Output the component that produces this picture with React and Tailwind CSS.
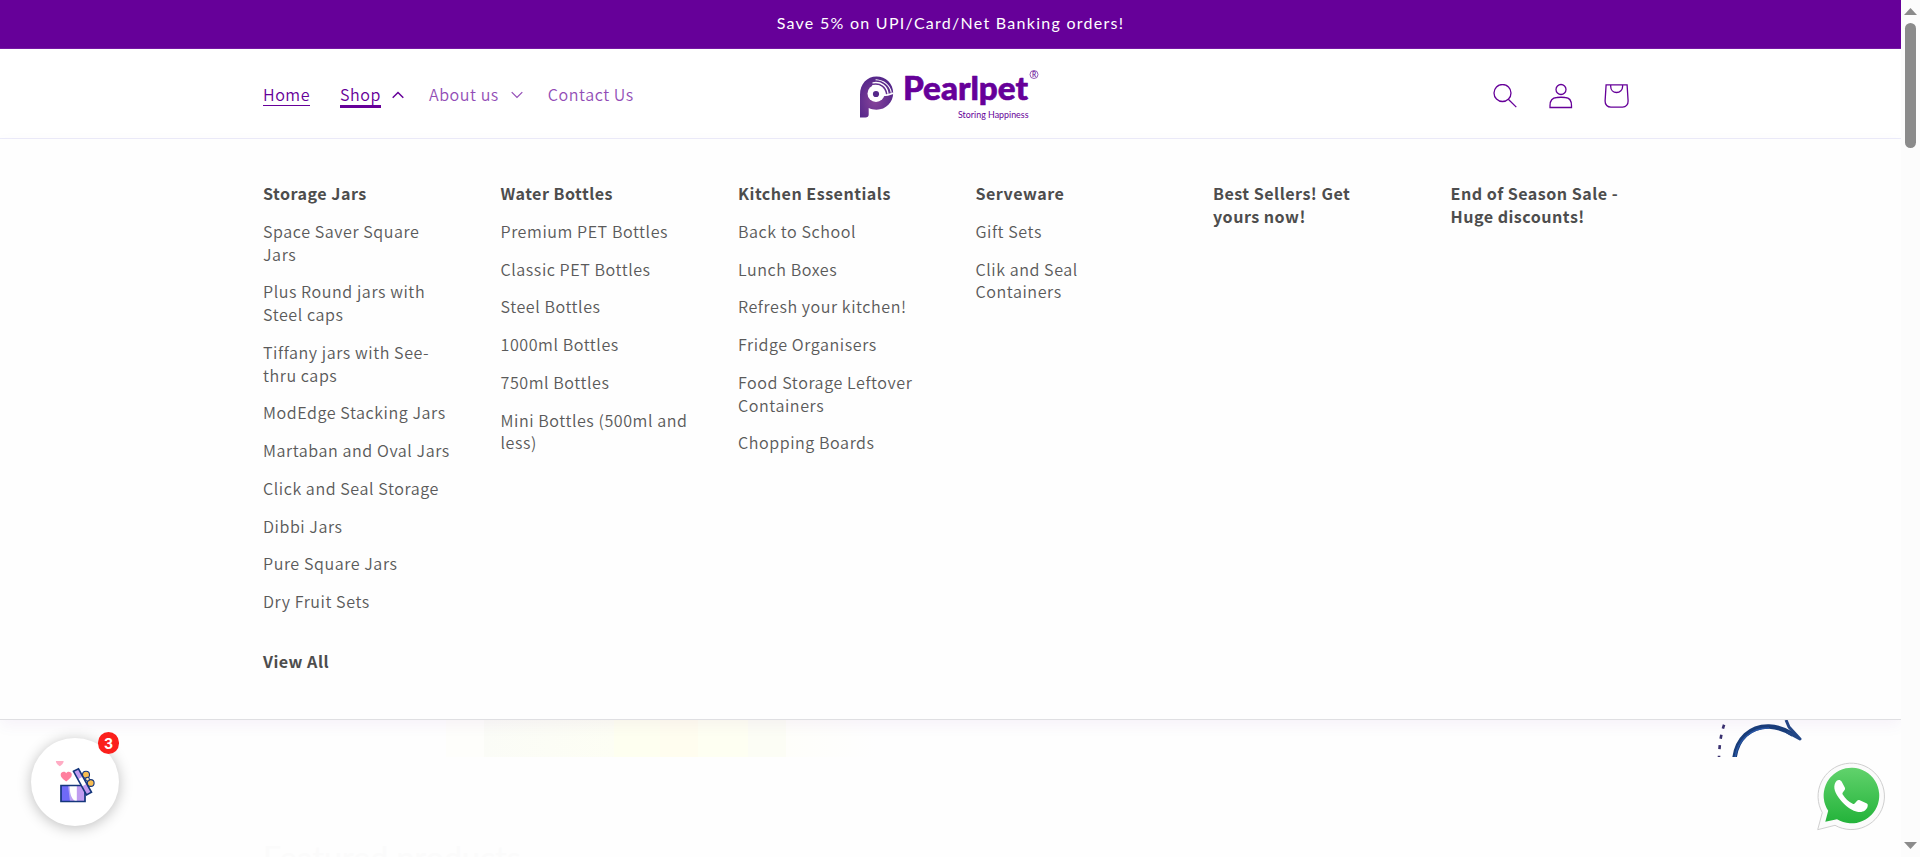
import React from "react";

const columns = [
  {
    title: "Storage Jars",
    items: [
      "Space Saver Square Jars",
      "Plus Round jars with Steel caps",
      "Tiffany jars with See-thru caps",
      "ModEdge Stacking Jars",
      "Martaban and Oval Jars",
      "Click and Seal Storage",
      "Dibbi Jars",
      "Pure Square Jars",
      "Dry Fruit Sets",
    ],
    footer: "View All",
  },
  {
    title: "Water Bottles",
    items: [
      "Premium PET Bottles",
      "Classic PET Bottles",
      "Steel Bottles",
      "1000ml Bottles",
      "750ml Bottles",
      "Mini Bottles (500ml and less)",
    ],
  },
  {
    title: "Kitchen Essentials",
    items: [
      "Back to School",
      "Lunch Boxes",
      "Refresh your kitchen!",
      "Fridge Organisers",
      "Food Storage Leftover Containers",
      "Chopping Boards",
    ],
  },
  { title: "Serveware", items: ["Gift Sets", "Clik and Seal Containers"] },
  { title: "Best Sellers! Get yours now!", items: [] },
  { title: "End of Season Sale - Huge discounts!", items: [] },
];

function Caret({ up }) {
  return (
    <svg width="12" height="8" viewBox="0 0 12 8" fill="none" stroke="currentColor" strokeWidth={up ? 1.5 : 1.2}>
      <path d={up ? "M.7 6.8 6 1.5l5.300 5.300" : "M.7 1.200 6 6.500l5.300-5.300"} />
    </svg>
  );
}

function Logo() {
  return (
    <svg width="184" height="54" viewBox="0 0 184 54">
      <defs>
        <radialGradient id="mark" cx="45%" cy="60%" r="60%">
          <stop offset="0" stopColor="#86439a" />
          <stop offset="1" stopColor="#55278a" />
        </radialGradient>
      </defs>
      <path
        d="M2 49.500V26.500C2 16 9 8.500 18.500 8.500c9.500 0 16.700 7.300 16.700 16.500S28 41.700 18.500 41.700c-3 0-5.500-.6-7.800-1.700v6.500c0 2-1.200 3-3.200 3z"
        fill="url(#mark)"
      />
      <circle cx="18" cy="25.500" r="8.500" fill="#fff" />
      <circle cx="18" cy="26" r="3.100" fill="#55278a" />
      <g fill="none" stroke="#fff" strokeLinecap="round">
        <path d="M15 18c6-1.500 11 2 12 8.500" strokeWidth="2" />
        <path d="M15 14.800c8-1.500 14 3.500 15 10.500" strokeWidth="1.300" />
        <path d="M18 11.800c8 .5 14 5.500 15.200 12.500" strokeWidth="1.100" />
        <path d="M24 27.500c4 .2 7-.5 11-2.200" strokeWidth="1.600" />
      </g>
      <text x="45" y="32" fontFamily="Lato, sans-serif" fontWeight="900" fontSize="31.500" textLength="125" lengthAdjust="spacingAndGlyphs" fill="#660099" stroke="#660099" strokeWidth=".6" strokeLinejoin="round">
        Pearlpet
      </text>
      <text x="100" y="50" fontFamily="Lato, sans-serif" fontSize="8.800" textLength="70.500" lengthAdjust="spacingAndGlyphs" fill="#660099">
        Storing Happiness
      </text>
      <circle cx="176" cy="6.500" r="4" fill="none" stroke="#8a45ae" strokeWidth=".9" />
      <text x="176" y="8.800" textAnchor="middle" fontFamily="Lato, sans-serif" fontWeight="700" fontSize="6.500" fill="#7a2ba3">
        R
      </text>
    </svg>
  );
}

function HeaderIcons() {
  return (
    <div className="flex items-center gap-[31px] text-[#660099]">
      <svg width="25" height="24" viewBox="0 0 25 24" fill="none" stroke="currentColor" strokeWidth="1.300">
        <circle cx="9.500" cy="9" r="8.500" />
        <path d="m15.300 15.300 8 7.800" />
      </svg>
      <svg width="24" height="26" viewBox="0 0 24 26" fill="none" stroke="currentColor" strokeWidth="1.300">
        <circle cx="12" cy="6.500" r="5" />
        <path d="M1 24.500v-1.800c0-4.700 2.300-8 6.800-8.200 2.700-.3 5.700-.3 8.400 0 4.500.2 6.300 3.500 6.300 8.200v1.800z" />
      </svg>
      <svg width="25" height="24" viewBox="0 0 25 24" fill="none" stroke="currentColor" strokeWidth="1.300">
        <path d="M2.100.9h21l1 16c.1 3.800-2.200 6.200-5.500 6.200H7c-3.500 0-6-2.400-5.900-6.200z" />
        <path d="M6.700 1v1.500c0 3.500 2.500 6 5.900 6s6-2.500 6-6V1" />
      </svg>
    </div>
  );
}

function GiftIcon() {
  return (
    <svg width="46" height="46" viewBox="1 0 46 46" className="overflow-visible">
      <path d="M5 2h7.500c.4 2-1.500 3.500-3.700 5.200C6.500 5.500 4.600 4 5 2z" fill="#ffacc4" />
      <path d="M15.200 22.500c-3.200-2.500-5.700-4.300-5.500-7 .2-2.700 3.900-3.800 5.500-1.200 1.600-2.600 5.400-1.500 5.600 1.200.1 2.700-2.400 4.500-5.600 7z" fill="#ff7f9e" />
      <path d="M10 26.500h24v16H10z" fill="#c09cf0" />
      <path d="M10 26.500h9v16h-9z" fill="#6f6af8" />
      <path d="M17 26.500h3v16h-1z" fill="#b6a5f6" />
      <path d="M18.500 26.500h7.300v16c-4-1-7-5-7.300-16z" fill="#fff" />
      <path d="M10 26.500h24v16H10z" fill="none" stroke="#15367c" strokeWidth="1.700" />
      <g stroke="#15367c" strokeWidth="1.100">
        <circle cx="35" cy="15.800" r="3.500" fill="#f8bd50" />
        <circle cx="39.700" cy="24" r="3.400" fill="#f8bd50" />
        <circle cx="36.500" cy="20.200" r="1.900" fill="#ffe7b5" />
      </g>
      <path d="m22.500 12.300 5-2.500 13 23.500-5 2.700z" fill="#c09cf0" />
      <path d="m27 20.300 5-2.700 4 7-5 2.800z" fill="#fff" />
      <path d="m22.500 12.300 5-2.500 13 23.500-5 2.700z" fill="none" stroke="#15367c" strokeWidth="1.600" />
    </svg>
  );
}

function WhatsAppIcon() {
  return (
    <svg width="68" height="69" viewBox="0 0 68 69">
      <defs>
        <linearGradient id="wa" x1="0" y1="0" x2="0" y2="1">
          <stop offset="0" stopColor="#61d26c" />
          <stop offset="1" stopColor="#23b33a" />
        </linearGradient>
      </defs>
      <path d="M.7 67.700 5.300 50.600A33.200 33.200 0 1 1 18 63.300z" fill="#fbfbfb" stroke="#cfcfcf" strokeWidth="1" />
      <path d="m8.300 59.800 2.900-11A27.800 27.800 0 1 1 20 57.300z" fill="url(#wa)" />
      <path
        d="M19.700 18.800c1.600-1.300 4-.9 4.900.8l3.200 5.800c.5 1.200.2 2.200-.6 3.200l-1.400 1.800c-.6.8-.4 1.400.1 2.300 2.500 4 5.600 7 9.800 9 .9.400 1.600.3 2.200-.4l2.200-2.600c.8-.9 1.600-1 2.700-.5l6.600 3.100c1.300.6 1.500 1.200 1.300 2.800-.7 3.900-4 6-7.700 6-3.500-.1-8.600-2-13.700-6.200-5.600-4.800-11-11.600-11.900-17.400-.4-3.200.6-6 2.300-7.700z"
        fill="#fff"
      />
    </svg>
  );
}

function Scrollbar() {
  return (
    <div className="flex w-[19px] shrink-0 flex-col items-center justify-between bg-[#fcfcfc] pt-2 pb-2">
      <div className="flex flex-col items-center gap-2">
        <svg width="13" height="7" viewBox="0 0 13 7">
          <path d="M6.500 0 13 7H0z" fill="#8b8b8b" />
        </svg>
        <div className="h-[125px] w-[11px] rounded-full bg-[#8b8b8b]" />
      </div>
      <svg width="13" height="7" viewBox="0 0 13 7">
        <path d="M0 0h13L6.500 7z" fill="#8b8b8b" />
      </svg>
    </div>
  );
}

export default function App() {
  return (
    <div className="flex h-[857px] w-[1920px] overflow-hidden bg-white font-['Noto_Sans_CJK_SC','Noto_Sans',sans-serif]">
      <div className="relative flex h-full w-[1901px] flex-col overflow-hidden bg-[#fefefe]">
        <div className="flex h-[49px] shrink-0 items-center justify-center border-b border-[#7519a3] bg-[#660099] pb-[3px] font-['Lato',sans-serif] text-[16px] font-normal tracking-[1.27px] text-white">
          Save 5% on UPI/Card/Net Banking orders!
        </div>

        <header className="grid h-[90px] shrink-0 grid-cols-[595px_184px_1fr] items-center border-b border-[#ececfa] bg-white pr-[272px] pl-[263px]">
          <nav className="flex items-center pt-[2px] text-[16.100px] leading-[23px] font-[350] tracking-[0.53px] text-[#660099]">
            <a className="border-b border-[#660099] leading-[21px]">Home</a>
            <a className="ml-[30px] flex items-center gap-[11px]">
              <span className="mt-0.5 border-b-[3px] border-[#660099] leading-[21px]">Shop</span>
              <Caret up />
            </a>
            <a className="ml-[25px] flex items-center gap-3 opacity-70">
              About us
              <Caret />
            </a>
            <a className="ml-[25px] opacity-70">Contact Us</a>
          </nav>
          <div className="pt-0.5">
            <Logo />
          </div>
          <div className="flex justify-end pt-1">
            <HeaderIcons />
          </div>
        </header>

        <section className="z-10 grid h-[581px] shrink-0 grid-cols-[repeat(6,188px)] content-start gap-x-[49.500px] border-b border-[#dfdfe2] bg-[#fefefe] pt-[43px] pl-[263px] text-[16.100px] leading-[22.750px] font-[350] tracking-[0.56px] text-[#5a5a5a] shadow-[0_5px_15px_rgba(102,0,153,0.05)]">
          {columns.map((column) => (
            <div key={column.title} className="flex flex-col gap-[15px]">
              <h3 className="font-bold tracking-[0.48px] text-[#4d4d4d]">{column.title}</h3>
              {column.items.map((item) => (
                <a key={item}>{item}</a>
              ))}
              {column.footer && <a className="mt-[22px] font-bold tracking-[0.48px] text-[#4d4d4d]">{column.footer}</a>}
            </div>
          ))}
        </section>

        <div className="flex h-[37px] shrink-0 justify-between pr-[95px] pl-[446px]">
          <div className="flex">
            <div className="w-[38px] bg-[#fefefb]" />
            <div className="w-[130px] bg-gradient-to-r from-[#fbfcf7] to-[#fdfef4]" />
            <div className="w-[46px] bg-[#fefff0]" />
            <div className="w-[38px] bg-[#fffdef]" />
            <div className="w-[50px] bg-[#fefff2]" />
            <div className="w-[38px] bg-[#fcfdf5]" />
            <div className="w-[90px] bg-gradient-to-r from-[#fefefa] to-[#fefefe]" />
          </div>
          <svg width="92" height="37" viewBox="0 0 92 37" fill="none">
            <path d="M11.500 1C7 12 5.500 24 5 37" stroke="#39306f" strokeWidth="2.600" strokeDasharray="4 6.500" strokeDashoffset="-4" />
            <path d="M20.500 38C23 19 36 6 55 6.500c10 .5 16 3 24 8" stroke="#183d79" strokeWidth="4.500" />
            <path d="M21 38C23.500 20 37 8 55 8" stroke="#2856a4" strokeWidth="1.500" />
            <path d="m72 0 3 7 11 12-13-7" stroke="#234786" strokeWidth="3" strokeLinejoin="round" />
          </svg>
        </div>
        <div className="flex grow items-start pt-[81px] pl-[263px] font-['Lato',sans-serif] text-[32px] leading-10 tracking-[0.1px] text-[#fbfbfb]">
          Featured products
        </div>

        <div className="absolute top-[738px] left-[31px] z-20 flex h-[88px] w-[88px] items-center justify-center rounded-full bg-white shadow-[0_2px_14px_rgba(0,0,0,0.25)]">
          <GiftIcon />
          <div className="absolute -top-1.5 right-0 flex h-[22px] w-[21px] items-center justify-center rounded-full bg-[#fb1f1b] font-['Inter',sans-serif] text-[14px] font-bold text-white">
            3
          </div>
        </div>
        <div className="absolute top-[762px] left-[1817px] z-20">
          <WhatsAppIcon />
        </div>
      </div>
      <Scrollbar />
    </div>
  );
}
